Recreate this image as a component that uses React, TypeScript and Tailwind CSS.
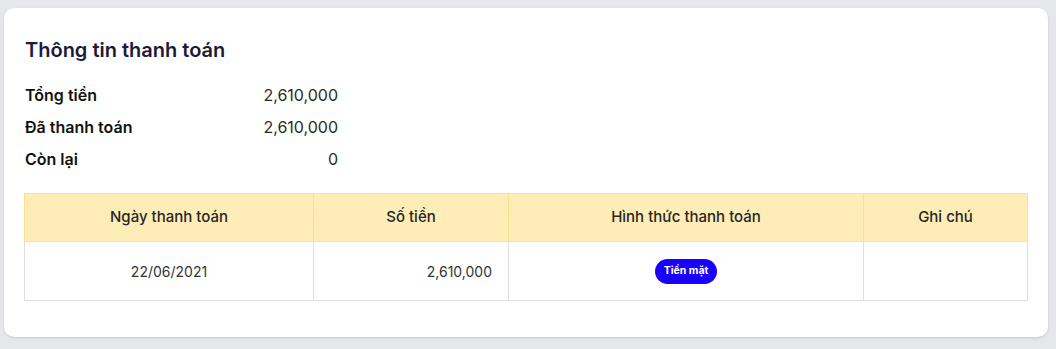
import React from "react";

export default function App() {
  return (
    <div
      className="w-[1056px] h-[349px] bg-[#e5e7eb] pt-2 pl-1 pr-2 pb-3"
      style={{ fontFamily: "Inter, 'Noto Sans', sans-serif" }}
    >
      <div className="h-full bg-white rounded-[10px] shadow-sm px-5 pt-[30px]">
        <h2 className="text-[20px] leading-[24px] font-semibold text-[#1c1b3a] px-px">
          Thông tin thanh toán
        </h2>
        <div className="mt-[17px] w-[314px] flex flex-col text-[16px] text-[#111]">
          {[
            ["Tổng tiền", "2,610,000"],
            ["Đã thanh toán", "2,610,000"],
            ["Còn lại", "0"],
          ].map(([k, v]) => (
            <div key={k} className="flex justify-between h-[32px] items-center pl-px">
              <span className="font-semibold">{k}</span>
              <span className="text-[#2a2a2a]">{v}</span>
            </div>
          ))}
        </div>
        <table className="mt-[18px] w-full border-collapse text-[14px] text-[#333]">
          <thead>
            <tr className="bg-[#ffedb8] h-[48px] text-[15px] text-[#262626]">
              <th className="w-[289px] font-medium border border-[#fde08a] border-b-[#e0e0e0]">Ngày thanh toán</th>
              <th className="w-[195px] font-medium border border-[#fde08a] border-b-[#e0e0e0]">Số tiền</th>
              <th className="w-[355px] font-medium border border-[#fde08a] border-b-[#e0e0e0]">Hình thức thanh toán</th>
              <th className="font-medium border border-[#fde08a] border-b-[#e0e0e0]">Ghi chú</th>
            </tr>
          </thead>
          <tbody>
            <tr className="h-[59px]">
              <td className="border border-[#e0e0e0] text-center">22/06/2021</td>
              <td className="border border-[#e0e0e0] text-right pr-4">2,610,000</td>
              <td className="border border-[#e0e0e0] text-center">
                <span className="inline-flex items-center h-[25px] px-[9px] rounded-full bg-[#1a00ff] text-white text-[10.5px] font-bold">
                  Tiền mặt
                </span>
              </td>
              <td className="border border-[#e0e0e0]"></td>
            </tr>
          </tbody>
        </table>
      </div>
    </div>
  );
}
